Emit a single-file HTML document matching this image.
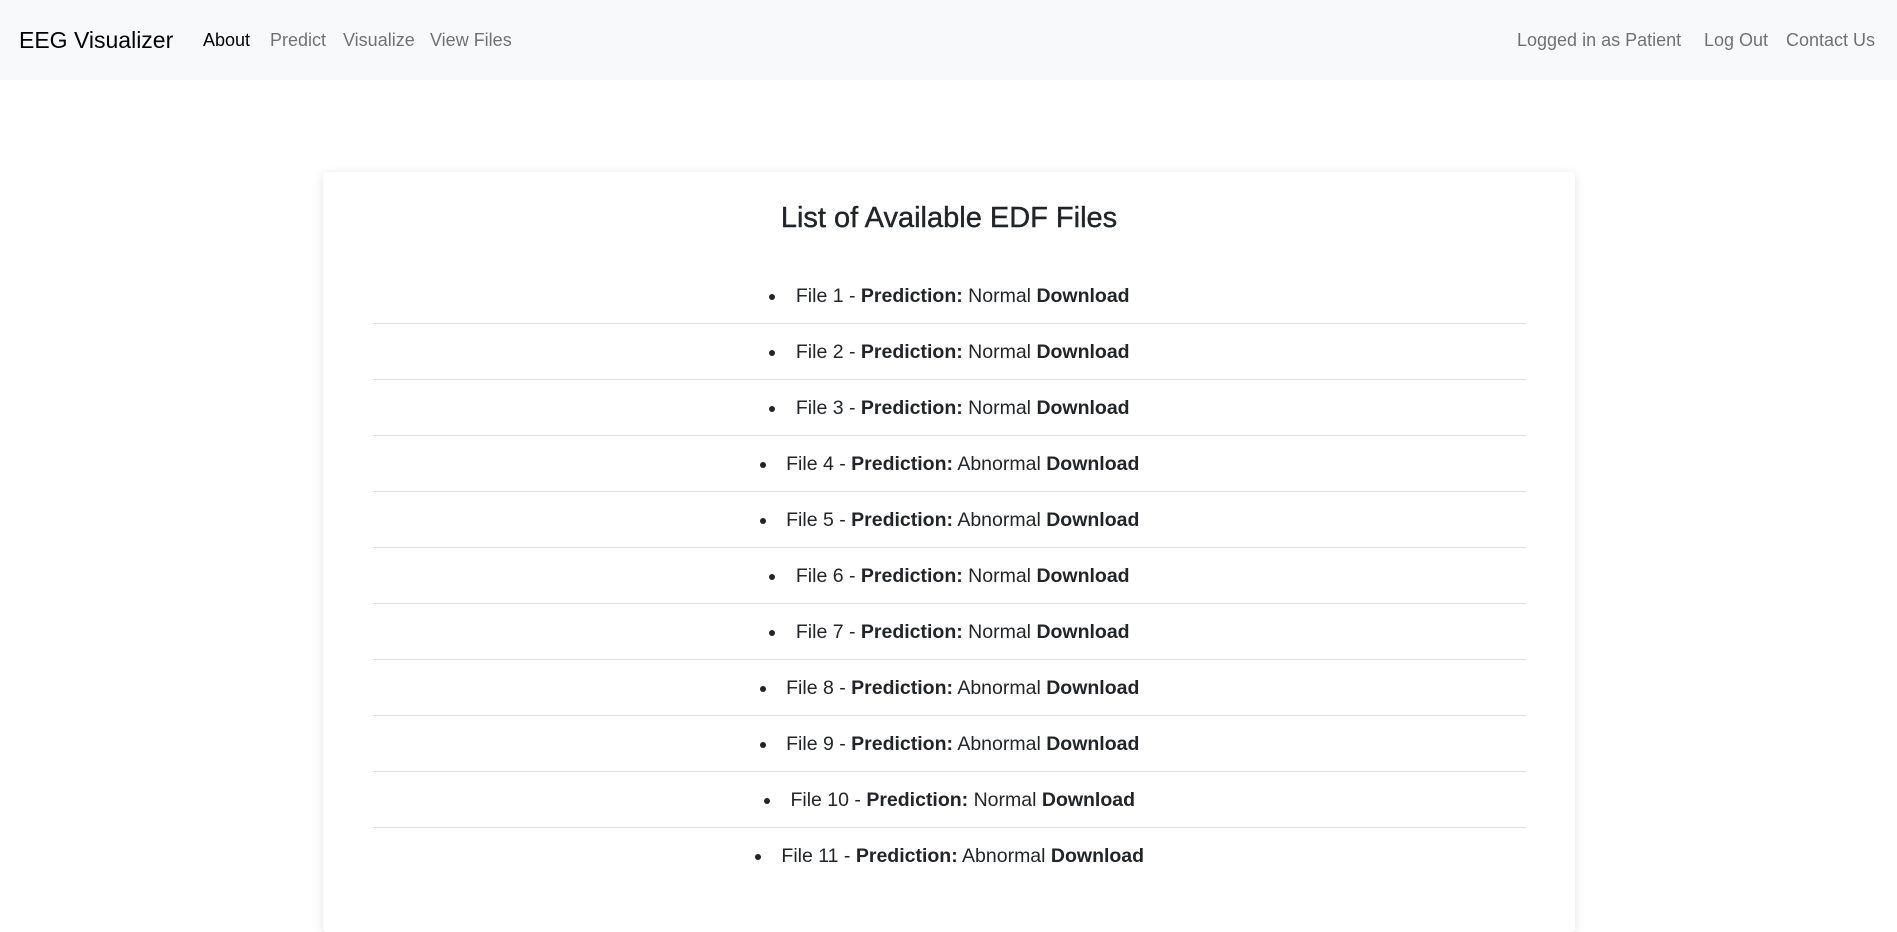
<!DOCTYPE html>
<html><head><meta charset="utf-8"><style>
body{margin:0;background:#fff;font-family:"Liberation Sans",sans-serif;color:#212529;width:1897px;height:882px;overflow:hidden;position:relative}
.nav{position:absolute;left:0;top:0;width:1897px;height:80px;background:#f8f9fa}
.nav span{position:absolute;top:28px;font-size:18px;color:rgba(0,0,0,.55);white-space:nowrap;line-height:24px}
.brand{font-size:23px!important;color:#000!important;top:26px!important;line-height:28px!important}
.card{position:absolute;left:323px;top:172px;width:1252px;height:760px;background:#fff;box-shadow:0 2px 10px rgba(0,0,0,.12);border-radius:4px}
h2{margin:0;position:absolute;top:198px;left:323px;width:1252px;text-align:center;font-size:29px;font-weight:500;line-height:40px;-webkit-text-stroke:0.4px #212529}
ul{position:absolute;left:373px;top:268px;width:1153px;margin:0;padding:0;list-style-position:inside;text-align:center;font-size:19.5px}
li{height:55px;line-height:56px;border-bottom:1px solid #dee2e6;box-sizing:content-box}
li:last-child{border-bottom:none}
li::marker{color:#212529}
</style></head><body>
<div class="nav">
<span class="brand" style="left:19px">EEG Visualizer</span>
<span style="left:203px;color:#000">About</span>
<span style="left:270px">Predict</span>
<span style="left:343px">Visualize</span>
<span style="left:430px">View Files</span>
<span style="left:1517px">Logged in as Patient</span>
<span style="left:1704px">Log Out</span>
<span style="left:1786px">Contact Us</span>
</div>
<div class="card"></div>
<h2>List of Available EDF Files</h2>
<ul>
<li>File 1 - <b>Prediction:</b> Normal <b>Download</b></li>
<li>File 2 - <b>Prediction:</b> Normal <b>Download</b></li>
<li>File 3 - <b>Prediction:</b> Normal <b>Download</b></li>
<li>File 4 - <b>Prediction:</b> Abnormal <b>Download</b></li>
<li>File 5 - <b>Prediction:</b> Abnormal <b>Download</b></li>
<li>File 6 - <b>Prediction:</b> Normal <b>Download</b></li>
<li>File 7 - <b>Prediction:</b> Normal <b>Download</b></li>
<li>File 8 - <b>Prediction:</b> Abnormal <b>Download</b></li>
<li>File 9 - <b>Prediction:</b> Abnormal <b>Download</b></li>
<li>File 10 - <b>Prediction:</b> Normal <b>Download</b></li>
<li>File 11 - <b>Prediction:</b> Abnormal <b>Download</b></li>
</ul>
</body></html>
